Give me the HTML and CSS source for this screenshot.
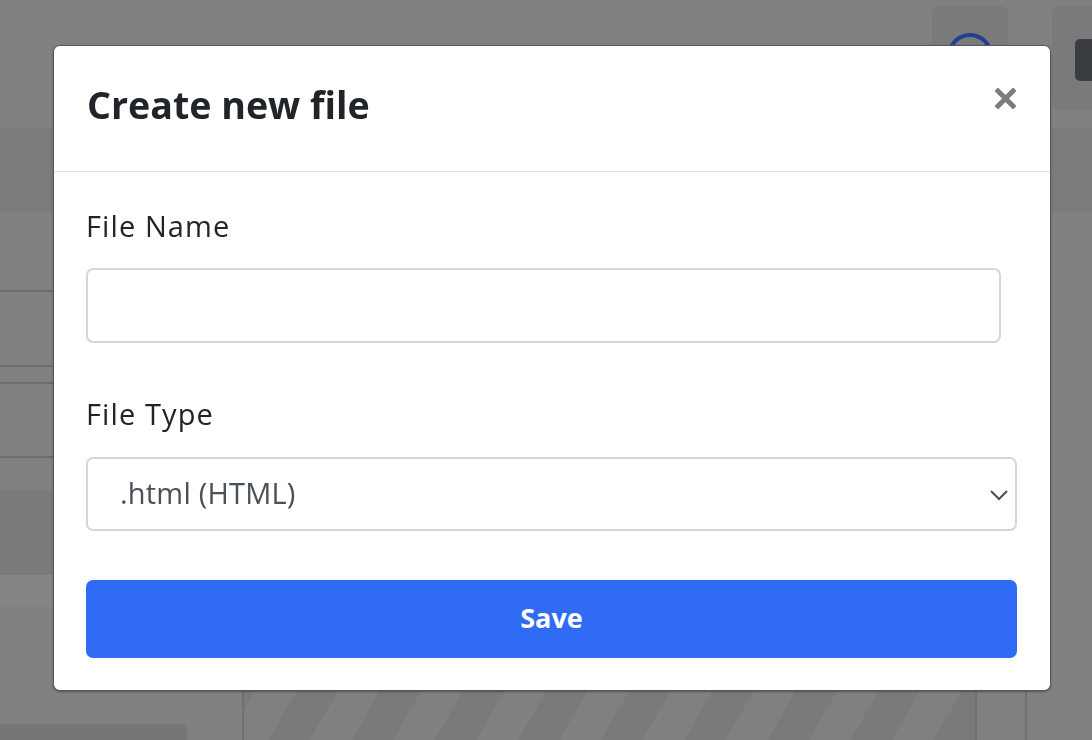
FILE: index.html
```html
<!DOCTYPE html>
<html lang="en">
<head>
<meta charset="utf-8">
<title>Create new file</title>
<link rel="stylesheet" href="styles.css">
</head>
<body>
<div class="page">
  <div class="topbar">
    <div class="top-card">
      <span class="ring"></span>
    </div>
    <div class="top-card top-card-2">
      <span class="dark-block"></span>
    </div>
  </div>
  <div class="band"></div>
  <div class="content">
    <div class="sidebar">
      <div class="side-row r1"></div>
      <div class="side-row r2"></div>
      <div class="side-row r3"></div>
      <div class="side-row r4"></div>
      <div class="side-row r5"></div>
      <div class="side-row r6"></div>
      <div class="side-row r7"></div>
      <div class="side-foot"></div>
    </div>
    <div class="main">
      <div class="stripes"></div>
    </div>
    <div class="rail"></div>
    <div class="rail2"></div>
  </div>
</div>

<div class="modal" role="dialog" aria-labelledby="modal-title">
  <div class="modal-header">
    <h2 id="modal-title" class="modal-title">Create new file</h2>
    <button class="close" aria-label="Close">
      <svg width="21" height="21" viewBox="0 0 21 21">
        <path d="M3 3 L18 18 M18 3 L3 18" stroke="#7c7c7c" stroke-width="5" stroke-linecap="square" fill="none"/>
      </svg>
    </button>
  </div>
  <div class="modal-body">
    <label class="label" for="fname">File Name</label>
    <input id="fname" class="text-input" type="text">
    <label class="label label-type" for="ftype">File Type</label>
    <div class="select">
      <span class="select-value">.html (HTML)</span>
      <svg class="chevron" width="20" height="12" viewBox="0 0 20 12">
        <path d="M2 2 L10 10 L18 2" stroke="#4a4f55" stroke-width="2" fill="none"/>
      </svg>
    </div>
    <button class="save">Save</button>
  </div>
</div>
</body>
</html>
```

FILE: styles.css
```css
* { box-sizing: border-box; }

html, body {
  margin: 0;
  padding: 0;
  width: 1092px;
  height: 740px;
  overflow: hidden;
  background: #808080;
  font-family: "Open Sans", "Noto Sans", "Liberation Sans", sans-serif;
}

.page {
  display: flex;
  flex-direction: column;
  height: 740px;
}

.topbar {
  height: 128px;
  display: flex;
  justify-content: flex-end;
  gap: 44px;
  padding-top: 6px;
  background: #808080;
}

.top-card {
  width: 76px;
  height: 104px;
  border-radius: 8px;
  background: #7a7a7a;
  display: flex;
  align-items: flex-start;
  justify-content: center;
  padding-top: 27px;
}

.top-card-2 {
  width: 40px;
  border-radius: 8px 0 0 8px;
  justify-content: flex-end;
  padding-top: 33px;
}

.ring {
  width: 46px;
  height: 46px;
  border-radius: 50%;
  border: 4px solid #1f3f93;
}

.dark-block {
  width: 17px;
  height: 42px;
  background: #3a3d42;
  border-radius: 5px 0 0 5px;
}

.band {
  height: 84px;
  background: #7b7b7b;
}

.content {
  flex: 1;
  display: flex;
}

.sidebar {
  width: 244px;
  display: flex;
  flex-direction: column;
  border-right: 2px solid #707070;
}

.side-row { border-bottom: 2px solid #6c6c6c; }
.r1 { height: 80px; }
.r2 { height: 75px; }
.r3 { height: 17px; }
.r4 { height: 74px; }
.r5 { height: 32px; border-bottom: 0; }
.r6 { height: 85px; background: #7a7a7a; border-bottom: 0; }
.r7 { height: 32px; background: #858585; border-bottom: 0; }
.side-foot {
  margin-top: auto;
  width: 187px;
  height: 16px;
  background: #767676;
  border-radius: 0 6px 0 0;
}

.main {
  width: 731px;
  display: flex;
  flex-direction: column;
  justify-content: flex-end;
}

.stripes {
  height: 60px;
  background: repeating-linear-gradient(
    -60deg,
    #7a7a7a 0 36px,
    #808080 36px 72px
  );
}

.rail {
  width: 50px;
  border-left: 2px solid #707070;
}

.rail2 {
  flex: 1;
  border-left: 2px solid #707070;
}

/* modal */
.modal {
  position: fixed;
  left: 53px;
  top: 45px;
  width: 998px;
  background: #ffffff;
  border: 1px solid #585858;
  border-radius: 7px;
  box-shadow: 0 1px 2px rgba(0, 0, 0, 0.35);
}

.modal-header {
  height: 126px;
  display: flex;
  align-items: flex-start;
  justify-content: space-between;
  padding: 36px 33px 0 33px;
  border-bottom: 1px solid #dee2e6;
}

.modal-title {
  margin: 0;
  font-size: 37.6px;
  line-height: 1.2;
  font-weight: 700;
  color: #212529;
}

.close {
  border: 0;
  background: none;
  padding: 0;
  margin-top: 6px;
  margin-right: 1px;
  width: 21px;
  height: 21px;
  display: flex;
}

.modal-body {
  display: flex;
  flex-direction: column;
  align-items: stretch;
  padding: 34px 33px 32px 32px;
}

.label {
  font-size: 29px;
  line-height: 40px;
  letter-spacing: 1.1px;
  color: #212529;
  font-weight: 400;
}

.text-input {
  margin-top: 22px;
  width: calc(100% - 16px);
  height: 75px;
  border: 2px solid #d3d6da;
  border-radius: 7px;
  background: #fff;
  font: inherit;
}

.label-type {
  margin-top: 51px;
}

.select {
  margin-top: 23px;
  height: 74px;
  border: 2px solid #d3d6da;
  border-radius: 7px;
  display: flex;
  align-items: center;
  justify-content: space-between;
  padding: 0 6px 0 32px;
}

.select-value {
  font-size: 29px;
  letter-spacing: 0.2px;
  color: #495057;
  margin-top: -4px;
}

.chevron {
  margin-top: 2px;
}

.save {
  margin-top: 49px;
  height: 78px;
  border: 0;
  border-radius: 7px;
  background: #306bf6;
  color: #ffffff;
  font-family: inherit;
  font-size: 27px;
  font-weight: 700;
  padding: 0 0 4px 0;
}
```
